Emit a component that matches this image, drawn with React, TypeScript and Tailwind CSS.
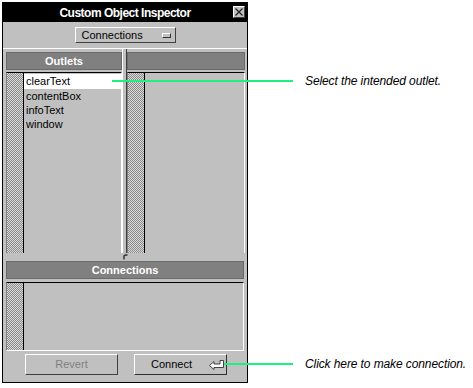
const pattern =
  'bg-[repeating-conic-gradient(#8a8a8a_0_25%,#dadada_0_50%)] bg-[length:2px_2px]'

function ListBox({ items }: { items?: string[] }) {
  return (
    <div className="flex h-[181px] border-t border-black border-l border-l-[#808080] border-r border-r-white">
      <div className={`w-[17px] border-r border-black ${pattern}`} />
      <div className="flex-1 flex flex-col pt-[1px]">
        {(items || []).map((it, i) => (
          <div
            key={it}
            className={`h-[14px] leading-[14px] pl-[2px] text-[11px] text-black ${i === 0 ? 'bg-white h-[15px]' : ''}`}
          >
            {it}
          </div>
        ))}
      </div>
    </div>
  )
}

function Header({ label }: { label?: string }) {
  return (
    <div className="h-[18px] bg-[#808080] border border-[#6a6a6a] flex items-center justify-center text-white text-[11px] font-bold">
      {label}
    </div>
  )
}

function ReturnIcon() {
  return (
    <svg width="15" height="10" viewBox="0 0 15 10">
      <path
        d="M0.5 5.5 L5 1.5 V4 H11 V0.5 H14.5 V7.5 H5 V9.5 Z"
        fill="#fff"
        stroke="#404040"
        strokeWidth="1"
      />
    </svg>
  )
}

function Callout({ left, top, width, text }: { left: number; top: number; width: number; text: string }) {
  return (
    <div className="absolute flex items-center h-[12px]" style={{ left, top }}>
      <div className="h-[2px] bg-[#20f080]" style={{ width }} />
      <span className="ml-[12px] text-[12px] italic tracking-[-0.1px] text-black whitespace-nowrap leading-none">
        {text}
      </span>
    </div>
  )
}

export default function App() {
  return (
    <div className="relative w-[473px] h-[388px] bg-white overflow-hidden font-['Liberation_Sans',Arial,sans-serif]">
      {/* Inspector window */}
      <div className="ml-[2px] mt-[2px] w-[246px] h-[381px] border border-black bg-[#c0c0c0] flex flex-col">
        {/* Title bar */}
        <div className="h-[19px] bg-black relative flex items-center justify-center">
          <span className="text-white text-[12px] font-bold tracking-[-0.5px]">Custom Object Inspector</span>
          <div className="absolute right-[2px] top-[3px] w-[12px] h-[12px] bg-[#c0c0c0] border-t border-l border-white border-b border-r border-b-[#404040] border-r-[#404040] flex items-center justify-center">
            <svg width="8" height="8" viewBox="0 0 8 8">
              <path d="M0.5 0.5 L7.5 7.5 M7.5 0.5 L0.5 7.5" stroke="#202020" strokeWidth="1.2" />
            </svg>
          </div>
        </div>

        {/* Popup */}
        <div className="h-[26px] flex items-center justify-center">
          <div className="w-[101px] h-[16px] border-t border-l border-white border-b border-r border-b-[#404040] border-r-[#404040] flex items-center pl-[6px] pr-[4px] text-[11px] text-black">
            <span className="flex-1">Connections</span>
            <div className="w-[9px] h-[5px] bg-[#c0c0c0] border-t border-l border-white border-b border-r border-b-[#303030] border-r-[#303030]" />
          </div>
        </div>

        {/* Outlets / targets */}
        <div className="h-[205px] border-t border-white flex pl-[3px] pr-[2px]">
          <div className="w-[116px] flex flex-col pt-[3px] gap-[2px]">
            <Header label="Outlets" />
            <ListBox items={['clearText', 'contentBox', 'infoText', 'window']} />
          </div>
          <div className="w-[4px] flex">
            <div className="w-[1px] bg-white" />
          </div>
          <div className="flex-1 flex flex-col pt-[3px] gap-[2px] border-l border-[#404040]">
            <Header />
            <ListBox />
          </div>
        </div>

        {/* Splitter handle */}
        <div className="h-[8px] flex justify-center">
          <svg width="5" height="6" viewBox="0 0 5 6" className="mt-[1px]">
            <path d="M1 5.5 V2.5 Q1 1 3 1 H4.5" stroke="#303030" strokeWidth="1.4" fill="none" />
          </svg>
        </div>

        {/* Connections */}
        <div className="px-[3px] flex flex-col">
          <Header label="Connections" />
          <div className="mt-[3px] h-[69px] flex border-t border-black border-b border-b-white border-r border-r-white border-l border-l-[#808080]">
            <div className={`w-[17px] border-r border-black ${pattern}`} />
            <div className="flex-1" />
          </div>
        </div>

        {/* Buttons */}
        <div className="mt-[3px] h-[21px] flex pl-[22px] gap-[16px]">
          <button className="w-[93px] h-[21px] border-t border-l border-white border-b border-r border-b-[#404040] border-r-[#404040] text-[11px] text-[#808080]">
            Revert
          </button>
          <button className="w-[93px] h-[21px] border-t border-l border-white border-b border-r border-b-[#303030] border-r-[#303030] text-[11px] text-black flex items-center pl-[16px] pr-[2px]">
            <span className="flex-1 text-left">Connect</span>
            <ReturnIcon />
          </button>
        </div>
      </div>

      <Callout left={112} top={75} width={181} text="Select the intended outlet." />
      <Callout left={224} top={358} width={69} text="Click here to make connection." />
    </div>
  )
}
